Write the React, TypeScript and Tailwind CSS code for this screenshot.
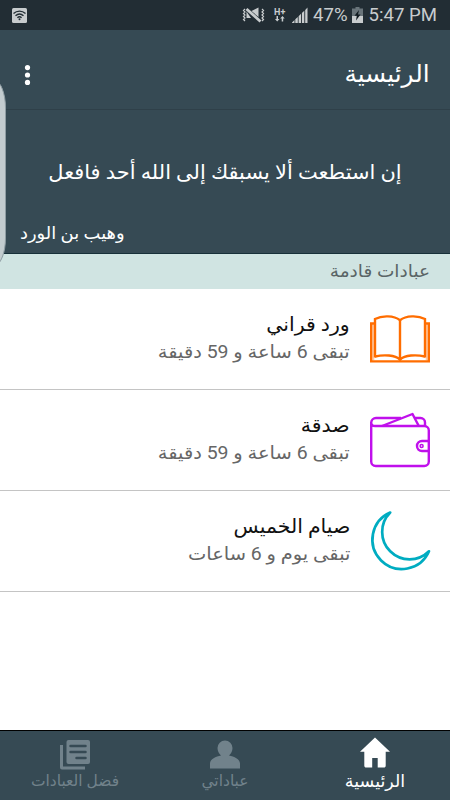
import { ReactNode } from 'react';
import { clsx } from 'clsx';

interface Worship {
  title: string;
  remaining: string;
  icon: ReactNode;
}

const BookIcon = () => (
  <svg width="60" height="60" viewBox="0 -7 60 60" fill="none" stroke="#ff6d00" strokeWidth="2.4">
    <path d="M3.4 8.6v35.7M56.6 8.6v35.7" stroke="#ffc9a3" strokeWidth="1.8" />
    <path d="M5 7.5H1.2V45.4H58.8V7.500H55" />
    <path d="M30 44.5V4.2C24-.6 12-.8 5 3v38.4M30 4.2C36-.6 48-.8 55 3v38.4" />
    <path d="M5 40.500c9-2 20-1.500 25 3 5-4.500 16-5 25-3" />
  </svg>
);

const WalletIcon = () => (
  <svg width="60" height="60" viewBox="0 -5.500 60 60" fill="none" stroke="#c010ec" strokeWidth="2.400" strokeLinejoin="round">
    <path d="M1.2 7V46a4.500 4.500 0 0 0 4.500 4.500h48.600a4.500 4.500 0 0 0 4.500-4.500V15a4.500 4.500 0 0 0-4.500-4.500H5C2.500 10.500 1.200 9 1.200 7A4.800 4.800 0 0 1 6 2.500H31" />
    <path d="M45 2.500h5.500A4.500 4.500 0 0 1 55 7v3.500" />
    <path d="M12 10.500 42.500-1.500 48.800 10.500" />
    <path d="M58.800 25.500H52a5 5 0 0 0 0 10h6.800" />
    <circle cx="51.600" cy="30.500" r="1.500" strokeWidth="1.500" />
  </svg>
);

const MoonIcon = () => (
  <svg width="60" height="60" viewBox="0 0 60 60" fill="none" stroke="#00acc1" strokeWidth="2.7" strokeLinejoin="round">
    <path d="M20.2 1.500A29.500 29.500 0 1 0 59 40.300 27 27 0 0 1 20.200 1.500Z" />
  </svg>
);

const items: Worship[] = [
  { title: 'ورد قراني', remaining: 'تبقى 6 ساعة و 59 دقيقة', icon: <BookIcon /> },
  { title: 'صدقة', remaining: 'تبقى 6 ساعة و 59 دقيقة', icon: <WalletIcon /> },
  { title: 'صيام الخميس', remaining: 'تبقى يوم و 6 ساعات', icon: <MoonIcon /> },
];

const StatusBar = () => (
  <div dir="ltr" className="flex h-[30px] items-center bg-[#222d34] pr-[13px] pl-3 text-[#c8ccce]">
    <svg width="15" height="15" viewBox="0 0 15 15">
      <rect width="15" height="15" rx="1.5" fill="currentColor" />
      <path
        d="M1.5 5.4c3.5-3.1 8.5-3.1 12 0M3.5 7.700c2.400-2.100 5.600-2.100 8 0M5.400 9.700c1.300-1.100 2.900-1.100 4.200 0"
        fill="none"
        stroke="#222d34"
        strokeWidth="1.4"
      />
      <circle cx="7.5" cy="11.2" r="1" fill="#222d34" />
    </svg>
    <div className="ml-auto flex items-center">
      {/* Vibrate / muted */}
      <svg width="23" height="16" viewBox="0 0 23 16" fill="currentColor">
        <path d="M4.500 4.500 9 11H4.500ZM9.500 4 16.500.500V10Z" />
        <path d="M4.500 2 18.500 14.500" stroke="currentColor" strokeWidth="2.800" />
        <path
          d="M3 2 1.500 3.500 3 5 1.500 6.500 3 8 1.500 9.500 3 11 1.500 12.500 3 14M20 2l1.500 1.500L20 5l1.500 1.500L20 8l1.500 1.500L20 11l1.500 1.500L20 14"
          fill="none"
          stroke="currentColor"
          strokeWidth="1.2"
        />
      </svg>
      {/* Mobile data */}
      <div className="ml-[9px] flex w-3 flex-col">
        <span className="font-[Roboto] text-[9px] leading-[8px] font-bold">H+</span>
        <svg width="12" height="6" viewBox="0 0 12 6" fill="currentColor">
          <path d="M2.500 0h1.500v3h1.500L3.200 5.500 1 3h1.500ZM7.700 5.500h1.500v-3h1.500L8.500 0 6.200 2.500h1.500Z" />
        </svg>
      </div>
      <svg className="ml-1.5" width="16" height="16" viewBox="0 0 16 16" fill="currentColor">
        <path d="M0 15.500 2.500 13v3H0ZM3.300 12.300 5.800 10v6H3.300ZM6.600 9.200 9 6.800V16H6.600ZM9.900 6l2.400-2.300V16H9.900ZM13.200 2.900 15.500.500V16h-2.300Z" />
      </svg>
      <span className="ml-[5px] font-[Roboto] text-[18.6px] leading-none">47%</span>
      <svg className="ml-1" width="11" height="16" viewBox="0 0 11 16">
        <path d="M3.500 0h4v1.500H11V9H0V1.500h3.500Z" fill="#69747a" />
        <path d="M0 9h11v7H0Z" fill="currentColor" />
        <path d="M7 3 2.500 8.800h2.300L4 13.500 8.500 7.500H6Z" fill="#111b21" />
      </svg>
      <span className="ml-1.5 font-[Roboto] text-[18.6px] leading-none">5:47 PM</span>
    </div>
  </div>
);

const Toolbar = () => (
  <header className="flex h-20 items-center justify-between border-b border-[#2f4049] px-5 pt-2 text-white">
    <h1 className="origin-right scale-x-[1.03] text-[24px]">الرئيسية</h1>
    <svg className="mt-0.5" width="15" height="20" viewBox="0 0 15 20" fill="currentColor">
      <circle cx="7.5" cy="2.6" r="2.6" />
      <circle cx="7.5" cy="10" r="2.6" />
      <circle cx="7.5" cy="17.4" r="2.6" />
    </svg>
  </header>
);

const Quote = () => (
  <section className="flex h-36 flex-col border-b border-[#173039] px-5 text-white">
    <p className="mt-[46px] scale-x-[1.045] text-center text-[20px] leading-8 whitespace-nowrap">
      إن استطعت ألا يسبقك إلى الله أحد فافعل
    </p>
    <p className="mt-[31px] origin-left scale-x-[1.05] text-left text-[17px] leading-7">وهيب بن الورد</p>
  </section>
);

const WorshipRow = ({ item }: { item: Worship }) => (
  <li className="flex h-[101px] border-b border-[#c4c4c4] px-5 pt-5">
    <div className="w-[60px] [&>svg]:overflow-visible">{item.icon}</div>
    <div className="mt-[5px] mr-5 whitespace-nowrap">
      <h3 className="origin-right scale-x-[1.05] text-[19.5px] leading-[22px] text-[#111]">{item.title}</h3>
      <p className="mt-[5px] origin-right scale-x-[1.08] text-[18px] leading-[22px] text-[#666]">{item.remaining}</p>
    </div>
  </li>
);

interface NavItemProps {
  label: string;
  active?: boolean;
  children: ReactNode;
}

const NavItem = ({ label, active, children }: NavItemProps) => (
  <div
    className={clsx(
      'flex flex-1 flex-col items-center pt-[5px]',
      active ? 'text-[17.5px] text-white' : 'text-[15.5px] text-[#71828b]'
    )}
  >
    <svg width="36" height="34" viewBox="0 0 36 34" fill="currentColor">
      {children}
    </svg>
    <span className="leading-[22px] whitespace-nowrap">{label}</span>
  </div>
);

const BottomNav = () => (
  <nav className="mt-auto flex h-[70px] border-t border-black bg-[#364a54]">
    <NavItem label="الرئيسية" active>
      <path d="m18 1.5 15 14.2h-4.300v14c0 1-.700 1.800-1.800 1.800h-6.200v-9.500h-5.500v9.500H9.100c-1 0-1.800-.700-1.800-1.800v-14H3Z" />
    </NavItem>
    <NavItem label="عباداتي">
      <path d="M18 4.500a7.500 7.500 0 0 1 7.500 7.500c0 3-1.500 5.700-3.500 7.500 5 1 11 3.500 11 8v5H3v-5c0-4.500 6-7 11-8-2-1.800-3.500-4.500-3.500-7.500A7.500 7.500 0 0 1 18 4.500Z" />
    </NavItem>
    <NavItem label="فضل العبادات">
      <path d="M3 9h3v21.500h22v3H5a2 2 0 0 1-2-2Z" />
      <path d="M11.500 4H31a2 2 0 0 1 2 2v20a2 2 0 0 1-2 2H11.500a2 2 0 0 1-2-2V6a2 2 0 0 1 2-2Z" />
      <path d="M13.500 10h15M13.500 16h15M19.500 22h9" stroke="#364a54" strokeWidth="2.5" strokeLinecap="round" />
    </NavItem>
  </nav>
);

export default function App() {
  return (
    <div
      dir="rtl"
      className="relative flex h-[800px] w-[450px] flex-col overflow-hidden bg-white font-[Roboto,'DejaVu_Sans',sans-serif]"
    >
      <StatusBar />
      <div className="bg-[#364a54]">
        <Toolbar />
        <Quote />
      </div>
      <h2 className="h-[35px] bg-[#d0e4e2] px-5 text-[17px] leading-[34px] text-[#5a6566]">
        <span className="inline-block origin-right scale-x-[1.09]">عبادات قادمة</span>
      </h2>
      <ul>
        {items.map((item) => (
          <WorshipRow key={item.title} item={item} />
        ))}
      </ul>
      <BottomNav />

      {/* Edge panel handle */}
      <div className="absolute top-[80px] left-[-20px] h-[186px] w-[26px] rounded-r-[12px_28px] border border-[#8f9da3] bg-[#c3cccf]" />
    </div>
  );
}
